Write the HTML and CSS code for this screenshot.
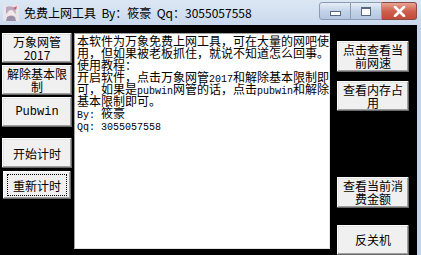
FILE: index.html
```html
<!DOCTYPE html>
<html>
<head>
	<title>免费上网工具</title>
	<link rel="stylesheet" href="styles.css">
</head>
<body>
	<div class="window">
		<!-- Title Bar -->
		<div class="titlebar">
			<svg class="app-icon" width="16" height="16" viewBox="0 0 16 16">
				<rect x="0" y="0" width="16" height="16" fill="#e9e4ea"/>
				<path d="M3 2 Q8 0 12 3 L13 9 Q10 6 8 7 Q5 6 3 9 Z" fill="#b9a7bf"/>
				<circle cx="8" cy="8" r="3" fill="#f6e6e6"/>
				<path d="M4 12 Q8 9 12 12 L13 16 L3 16 Z" fill="#9c8fa8"/>
				<path d="M10 3 L14 1 L13 5 Z" fill="#d35a6a"/>
			</svg>
			<span class="title-text">免费上网工具&nbsp; By：筱豪&nbsp; Qq：3055057558</span>
			<div class="caption-btns">
				<div class="cap-btn cap-min"><span class="min-glyph"></span></div>
				<div class="cap-btn cap-max"><span class="max-glyph"></span></div>
				<div class="cap-btn cap-close">
					<svg width="13" height="11" viewBox="0 0 13 11">
						<path d="M2 1 L11 10 M11 1 L2 10" stroke="#fff" stroke-width="2.6" stroke-linecap="round"/>
					</svg>
				</div>
			</div>
		</div>

		<!-- Client Area -->
		<div class="client">
			<div class="left-col">
				<div class="btn b-wanxiang">万象网管<br>2017</div>
				<div class="btn b-jiechu">解除基本限<br>制</div>
				<div class="btn b-pubwin">Pubwin</div>
				<div class="btn b-start">开始计时</div>
				<div class="btn b-restart focused"><span class="focus-ring">重新计时</span></div>
			</div>

			<div class="memo">
				<div>本软件为万象免费上网工具，可在大量的网吧使</div>
				<div>用，但如果被老板抓住，就说不知道怎么回事。</div>
				<div>使用教程：</div>
				<div>开启软件，点击万象网管<span class="en">2017</span>和解除基本限制即</div>
				<div>可，如果是<span class="en">pubwin</span>网管的话，点击<span class="en">pubwin</span>和解除</div>
				<div>基本限制即可。</div>
				<div><span class="en">By: </span>筱豪</div>
				<div><span class="en">Qq: 3055057558</span></div>
			</div>

			<div class="right-col">
				<div class="btn r-speed">点击查看当<br>前网速</div>
				<div class="btn r-mem">查看内存占<br>用</div>
				<div class="btn r-cost">查看当前消<br>费金额</div>
				<div class="btn r-shutdown">反关机</div>
			</div>

			<div class="frame-right"></div>
		</div>
	</div>
</body>
</html>
```

FILE: styles.css
```css
body {
	margin: 0;
	background-color: #000;
	font-family: "Noto Sans CJK SC", "Liberation Sans", sans-serif;
	overflow: hidden;
}

.window {
	width: 421px;
	height: 255px;
	display: flex;
	flex-direction: column;
	background-color: #000;
}

/* title bar */
.titlebar {
	height: 25px;
	display: flex;
	align-items: center;
	background: linear-gradient(#dce7f4, #c9d9ec);
	box-sizing: border-box;
	padding-left: 3px;
}

.app-icon {
	flex: none;
}

.title-text {
	margin-left: 5px;
	font-size: 12px;
	color: #000;
	white-space: nowrap;
}

.caption-btns {
	margin-left: auto;
	margin-right: 4px;
	align-self: flex-start;
	margin-top: 2px;
	display: flex;
}

.cap-btn {
	height: 18px;
	box-sizing: border-box;
	display: flex;
	align-items: center;
	justify-content: center;
	border: 1px solid #8a9bb4;
}

.cap-min {
	width: 32px;
	border-radius: 3px 0 0 3px;
	background: linear-gradient(#e7eef7, #c3d3e8 50%, #b4c7e0);
}

.cap-max {
	width: 31px;
	border-left: none;
	background: linear-gradient(#e7eef7, #c3d3e8 50%, #b4c7e0);
}

.cap-close {
	width: 35px;
	border-left: none;
	border-color: #8d4a43;
	border-radius: 0 3px 3px 0;
	background: linear-gradient(#e8a493, #d0604e 50%, #c24a38);
}

.min-glyph {
	width: 9px;
	height: 3px;
	margin-top: 5px;
	background: #fff;
	border: 1px solid #556880;
}

.max-glyph {
	width: 8px;
	height: 6px;
	background: #fff;
	border: 1px solid #556880;
	border-top-width: 2px;
}

/* client area */
.client {
	flex: 1;
	display: flex;
	min-height: 0;
}

.btn {
	box-sizing: border-box;
	background-color: #f0f0f0;
	box-shadow: inset -1px -1px #696969, inset 1px 1px #fff, inset -2px -2px #a0a0a0, inset 2px 2px #e3e3e3;
	font-size: 12px;
	line-height: 13px;
	color: #000;
	display: flex;
	align-items: center;
	justify-content: center;
	text-align: center;
}

.left-col {
	width: 70px;
	margin-left: 2px;
	padding-top: 8px;
	display: flex;
	flex-direction: column;
}

.left-col .btn {
	height: 30px;
	margin-bottom: 2px;
}

.b-pubwin {
	font-family: "Liberation Mono", monospace;
}

.b-start {
	margin-top: 9px;
}

.btn.focused {
	border: 1px solid #000;
	box-shadow: inset -1px -1px #696969, inset 1px 1px #fff, inset -2px -2px #a0a0a0;
}

.focus-ring {
	display: flex;
	align-items: center;
	justify-content: center;
	width: 60px;
	height: 22px;
	border: 1px dotted #000;
	box-sizing: border-box;
}

.memo {
	width: 256px;
	height: 216px;
	margin-left: 2px;
	margin-top: 8px;
	box-sizing: border-box;
	background-color: #fff;
	border-top: 1px solid #a0a0a0;
	border-left: 1px solid #a0a0a0;
	border-right: 1px solid #e3e3e3;
	border-bottom: 1px solid #e3e3e3;
	padding: 1px 0 0 2px;
	font-size: 12px;
	line-height: 12px;
	color: #000;
	white-space: nowrap;
}

.memo div {
	height: 12px;
}

.memo .en {
	font-family: "Liberation Mono", monospace;
	font-size: 10px;
	line-height: 10px;
}

.right-col {
	width: 72px;
	margin-left: 7px;
	padding-top: 16px;
	display: flex;
	flex-direction: column;
}

.right-col .btn {
	height: 31px;
}

.r-mem {
	margin-top: 9px;
}

.r-cost {
	margin-top: 66px;
}

.r-shutdown {
	margin-top: 17px;
}

.frame-right {
	width: 4px;
	margin-left: auto;
	background-color: #c2d5ea;
}
```
